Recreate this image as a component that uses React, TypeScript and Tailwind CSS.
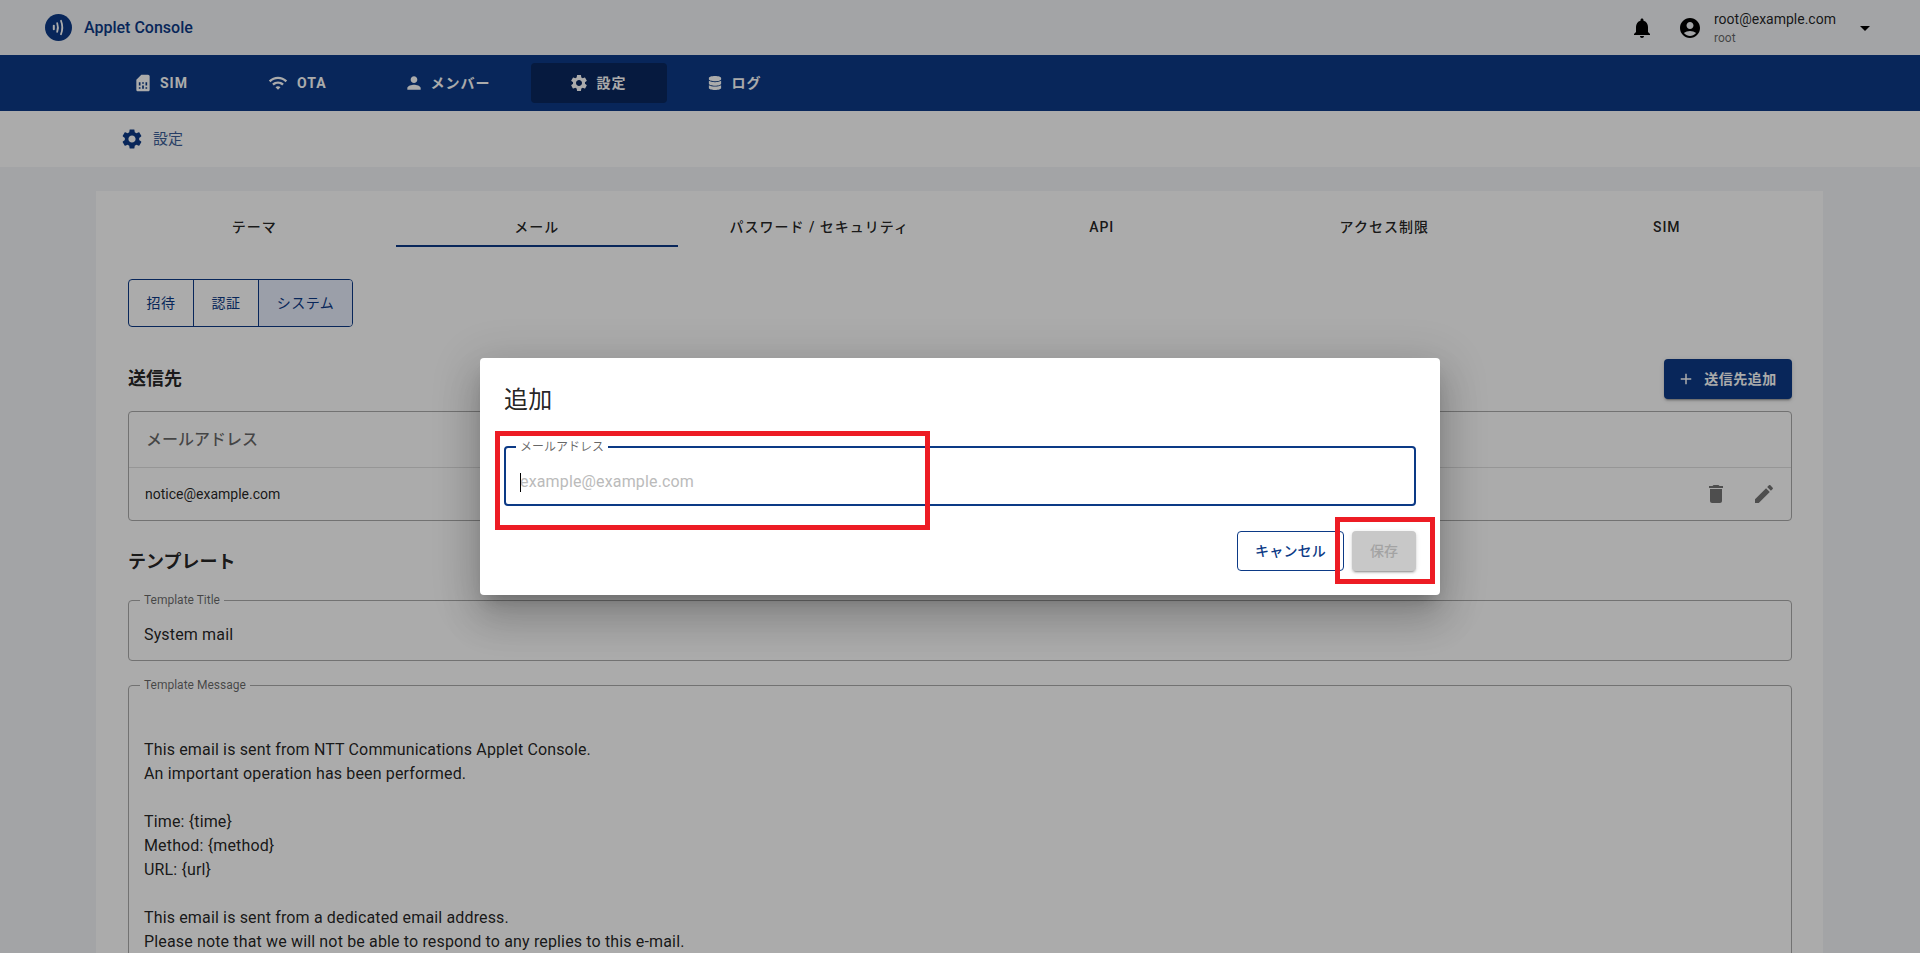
import React from "react";
import { FaDatabase } from "react-icons/fa";

const P = {
  sim: "M19.99 4c0-1.1-.89-2-1.99-2h-8L4 8v12c0 1.1.9 2 2 2h12c1.1 0 2-.9 2-2l-.01-16zM9 19H7v-2h2v2zm8 0h-2v-2h2v2zm-8-4H7v-4h2v4zm4 4h-2v-4h2v4zm0-6h-2v-2h2v2zm4 2h-2v-4h2v4z",
  wifi: "M1 9l2 2c4.97-4.97 13.03-4.97 18 0l2-2C16.93 2.93 7.08 2.93 1 9zm8 8l3 3 3-3c-1.65-1.66-4.34-1.66-6 0zm-4-4l2 2c2.76-2.76 7.24-2.76 10 0l2-2C15.14 9.14 8.87 9.14 5 13z",
  person: "M12 12c2.21 0 4-1.79 4-4s-1.79-4-4-4-4 1.79-4 4 1.79 4 4 4zm0 2c-2.67 0-8 1.34-8 4v2h16v-2c0-2.66-5.33-4-8-4z",
  settings: "M19.14 12.94c.04-.3.06-.61.06-.94 0-.32-.02-.64-.07-.94l2.03-1.58c.18-.14.23-.41.12-.61l-1.92-3.32c-.12-.22-.37-.29-.59-.22l-2.39.96c-.5-.38-1.03-.7-1.62-.94l-.36-2.54c-.04-.24-.24-.41-.48-.41h-3.84c-.24 0-.43.17-.47.41l-.36 2.54c-.59.24-1.13.57-1.62.94l-2.39-.96c-.22-.08-.47 0-.59.22L2.74 8.87c-.12.21-.08.47.12.61l2.03 1.58c-.05.3-.09.63-.09.94s.02.64.07.94l-2.03 1.58c-.18.14-.23.41-.12.61l1.92 3.32c.12.22.37.29.59.22l2.39-.96c.5.38 1.03.7 1.62.94l.36 2.54c.05.24.24.41.48.41h3.84c.24 0 .44-.17.47-.41l.36-2.54c.59-.24 1.13-.56 1.62-.94l2.39.96c.22.08.47 0 .59-.22l1.92-3.32c.12-.22.07-.47-.12-.61l-2.01-1.58zM12 15.6c-1.98 0-3.6-1.62-3.6-3.6s1.62-3.6 3.6-3.6 3.6 1.62 3.6 3.6-1.62 3.6-3.6 3.6z",
  bell: "M12 22c1.1 0 2-.9 2-2h-4c0 1.1.89 2 2 2zm6-6v-5c0-3.07-1.64-5.64-4.5-6.32V4c0-.83-.67-1.5-1.5-1.5s-1.5.67-1.5 1.5v.68C7.63 5.36 6 7.92 6 11v5l-2 2v1h16v-1l-2-2z",
  account: "M12 2C6.48 2 2 6.48 2 12s4.48 10 10 10 10-4.48 10-10S17.52 2 12 2zm0 4c1.93 0 3.5 1.57 3.5 3.5S13.93 13 12 13s-3.5-1.57-3.5-3.5S10.07 6 12 6zm0 14c-2.03 0-4.43-.82-6.14-2.88C7.55 15.8 9.68 15 12 15s4.45.8 6.14 2.12C16.43 19.18 14.03 20 12 20z",
  drop: "M7 10l5 5 5-5z",
  trash: "M6 19c0 1.1.9 2 2 2h8c1.1 0 2-.9 2-2V7H6v12zM19 4h-3.5l-1-1h-5l-1 1H5v2h14V4z",
  edit: "M3 17.25V21h3.75L17.81 9.94l-3.75-3.75L3 17.25zM20.71 7.04c.39-.39.39-1.02 0-1.41l-2.34-2.34c-.39-.39-1.02-.39-1.41 0l-1.83 1.83 3.75 3.75 1.83-1.83z",
  add: "M19 13h-6v6h-2v-6H5v-2h6V5h2v6h6v2z",
};

function Icon({ d, className }: { d: string; className: string }) {
  return (
    <svg viewBox="0 0 24 24" fill="currentColor" className={className}>
      <path d={d} />
    </svg>
  );
}

function Logo() {
  return (
    <svg viewBox="0 0 27 27" className="w-[27px] h-[27px]">
      <circle cx="13.5" cy="13.5" r="13.5" fill="#0c3a86" />
      <path d="M8.8 11.8v3.4" fill="none" stroke="#fff" strokeWidth="2" strokeLinecap="round" />
      <path d="M12.2 9.2c1 2.8 1 5.8 0 8.6" fill="none" stroke="#fff" strokeWidth="1.8" strokeLinecap="round" />
      <path d="M16 6.8c1.7 4.4 1.7 9 0 13.4" fill="none" stroke="#fff" strokeWidth="1.8" strokeLinecap="round" />
    </svg>
  );
}

const message = `This email is sent from NTT Communications Applet Console.
An important operation has been performed.

Time: {time}
Method: {method}
URL: {url}

This email is sent from a dedicated email address.
Please note that we will not be able to respond to any replies to this e-mail.`;

const tabs = ["テーマ", "メール", "パスワード / セキュリティ", "API", "アクセス制限", "SIM"];

export default function App() {
  return (
    <div className="relative h-[953px] overflow-hidden bg-[#f3f5f8] font-['Roboto','Noto_Sans_CJK_JP',sans-serif] text-[#000000de]">
      {/* Header */}
      <header className="h-[55px] flex items-center pl-[45px] pr-[43px]">
        <Logo />
        <span className="ml-[12px] text-[16px] font-medium text-[#0c3a86]">Applet Console</span>
        <div className="ml-auto flex items-center">
          <Icon d={P.bell} className="w-[24px] h-[24px] text-black" />
          <Icon d={P.account} className="ml-[24px] w-[24px] h-[24px] text-black" />
          <div className="ml-[12px] w-[139px] flex flex-col">
            <span className="text-[14px] leading-[20px] text-[#000000de]">root@example.com</span>
            <span className="text-[12px] leading-[18px] text-[#00000099]">root</span>
          </div>
          <Icon d={P.drop} className="w-[24px] h-[24px] text-black" />
        </div>
      </header>

      {/* Navigation */}
      <nav className="h-[56px] bg-[#0c3a86] flex items-center pl-[96px] text-white text-[14px] font-bold tracking-[1px]">
        <div className="h-[40px] px-[40px] flex items-center gap-[10px] rounded-[4px]">
          <Icon d={P.sim} className="w-[20px] h-[20px] -mx-[3px]" />
          <span>SIM</span>
        </div>
        <div className="h-[40px] pl-[40px] pr-[39px] flex items-center gap-[9px] rounded-[4px]">
          <Icon d={P.wifi} className="w-[20px] h-[20px]" />
          <span>OTA</span>
        </div>
        <div className="h-[40px] px-[40px] flex items-center gap-[9px] rounded-[4px]">
          <Icon d={P.person} className="w-[20px] h-[20px] -mx-[2px]" />
          <span>メンバー</span>
        </div>
        <div className="h-[40px] px-[40px] flex items-center gap-[10px] rounded-[4px] bg-[#09275e]">
          <Icon d={P.settings} className="w-[20px] h-[20px] -mx-[2px]" />
          <span>設定</span>
        </div>
        <div className="h-[40px] pl-[41px] pr-[40px] flex items-center gap-[10px] rounded-[4px]">
          <FaDatabase className="w-[14px] h-[14px]" />
          <span>ログ</span>
        </div>
      </nav>

      {/* Sub header */}
      <div className="h-[56px] bg-white flex items-center pl-[120px] text-[#0c3a86]">
        <Icon d={P.settings} className="w-[24px] h-[24px]" />
        <span className="ml-[9px] text-[15px] text-[#3d5f99]">設定</span>
      </div>

      {/* Page */}
      <main className="pl-[96px] pr-[97px] pt-[24px]">
        <section className="bg-white h-[800px]">
          <div className="pt-[19px] pl-[17px] pr-[15px]">
            <div className="grid grid-cols-6 h-[37px] text-[14px] font-medium tracking-[1px]">
              {tabs.map((t, i) => (
                <div
                  key={t}
                  className={
                    i === 1
                      ? "flex items-center justify-center border-b-2 border-[#0c3a86]"
                      : "flex items-center justify-center border-b-2 border-transparent"
                  }
                >
                  {t}
                </div>
              ))}
            </div>
          </div>

          <div className="pl-[32px] pr-[31px]">
            {/* Toggle group */}
            <div className="mt-[32px] inline-flex h-[48px] align-top rounded-[4px] border border-[#0c3a86] text-[14px] tracking-[0.5px] text-[#0c3a86]">
              <div className="w-[65px] flex items-center justify-center border-r border-[#0c3a86]">招待</div>
              <div className="w-[65px] flex items-center justify-center border-r border-[#0c3a86]">認証</div>
              <div className="w-[93px] flex items-center justify-center bg-[#e7edfc] rounded-r-[3px]">システム</div>
            </div>

            {/* Recipients */}
            <div className="mt-[32px] h-[40px] flex items-center justify-between">
              <h2 className="-mt-[2px] text-[18px] font-bold">送信先</h2>
              <button className="w-[128px] h-[40px] flex items-center justify-center gap-[9px] rounded-[4px] bg-[#0c3a86] text-white text-[14px] font-bold tracking-[0.5px] shadow-[0_3px_1px_-2px_rgba(0,0,0,0.2),0_2px_2px_0_rgba(0,0,0,0.14),0_1px_5px_0_rgba(0,0,0,0.12)]">
                <Icon d={P.add} className="w-[18px] h-[18px] -ml-[2px]" />
                <span>送信先追加</span>
              </button>
            </div>

            <div className="mt-[12px] h-[110px] rounded-[4px] border border-[#aaaaaa]">
              <div className="h-[56px] flex items-center pl-[17px] border-b border-[#e0e0e0] text-[16px] font-medium text-[#00000099]">
                メールアドレス
              </div>
              <div className="h-[52px] flex items-center pl-[16px] pr-[15px] text-[14px]">
                <span>notice@example.com</span>
                <Icon d={P.trash} className="ml-auto w-[24px] h-[24px] text-[#0000008a]" />
                <Icon d={P.edit} className="ml-[24px] w-[24px] h-[24px] text-[#0000008a]" />
              </div>
            </div>

            {/* Template */}
            <h2 className="mt-[26px] h-[28px] flex items-center text-[18px] font-bold">テンプレート</h2>

            <fieldset className="mt-[17px] h-[69px] rounded-[4px] border border-[#aaaaaa] px-[15px]">
              <legend className="ml-[-4px] px-[4px] text-[12px] leading-[16px] text-[#00000099]">Template Title</legend>
              <div className="h-[52px] pt-[2px] flex items-center text-[16px] tracking-[0.15px]">System mail</div>
            </fieldset>

            <fieldset className="mt-[16px] h-[420px] rounded-[4px] border border-[#aaaaaa] px-[15px]">
              <legend className="ml-[-4px] px-[4px] text-[12px] leading-[16px] text-[#00000099]">Template Message</legend>
              <div className="pt-[45px] text-[16px] leading-[24px] tracking-[0.15px] whitespace-pre-line">{message}</div>
            </fieldset>
          </div>
        </section>
      </main>

      {/* Backdrop and dialog */}
      <div className="absolute inset-0 flex items-center justify-center bg-[#00000054]">
        <div className="relative w-[960px] h-[237px] bg-white rounded-[4px] px-[24px] pt-[22px] shadow-[0_11px_15px_-7px_rgba(0,0,0,0.2),0_24px_38px_3px_rgba(0,0,0,0.14),0_9px_46px_8px_rgba(0,0,0,0.12)]">
          <h1 className="h-[40px] flex items-center text-[24px] tracking-[0.3px] text-[#000000de]">追加</h1>

          <fieldset className="relative mt-[19px] h-[67px] rounded-[4px] border-2 border-[#0c3a86]">
            <legend className="ml-[10px] px-[4px] text-[12px] leading-[16px] text-[#00000099]">メールアドレス</legend>
            <input
              readOnly
              placeholder="example@example.com"
              className="w-full h-[49px] pt-[3px] px-[14px] text-[16px] tracking-[0.15px] outline-none placeholder:text-[#bbbbbb]"
            />
            <span className="absolute left-[14px] top-[18px] w-px h-[19px] bg-black" />
          </fieldset>

          <div className="mt-[25px] flex justify-end gap-[8px]">
            <button className="w-[107px] h-[40px] rounded-[4px] border border-[#0c3a86] text-[14px] font-medium tracking-[0.2px] text-[#0c3a86]">キャンセル</button>
            <button className="w-[64px] h-[40px] rounded-[4px] bg-[#c8c8c8] text-[14px] font-medium text-[#a3a3a3] shadow-[0_3px_1px_-2px_rgba(0,0,0,0.2),0_2px_2px_0_rgba(0,0,0,0.14),0_1px_5px_0_rgba(0,0,0,0.12)]">保存</button>
          </div>

          {/* Red annotations */}
          <div className="absolute left-[15px] top-[73px] w-[435px] h-[99px] border-[5px] border-[#ed1c24]" />
          <div className="absolute left-[855px] top-[159px] w-[100px] h-[67px] border-[5px] border-[#ed1c24]" />
        </div>
      </div>
    </div>
  );
}
